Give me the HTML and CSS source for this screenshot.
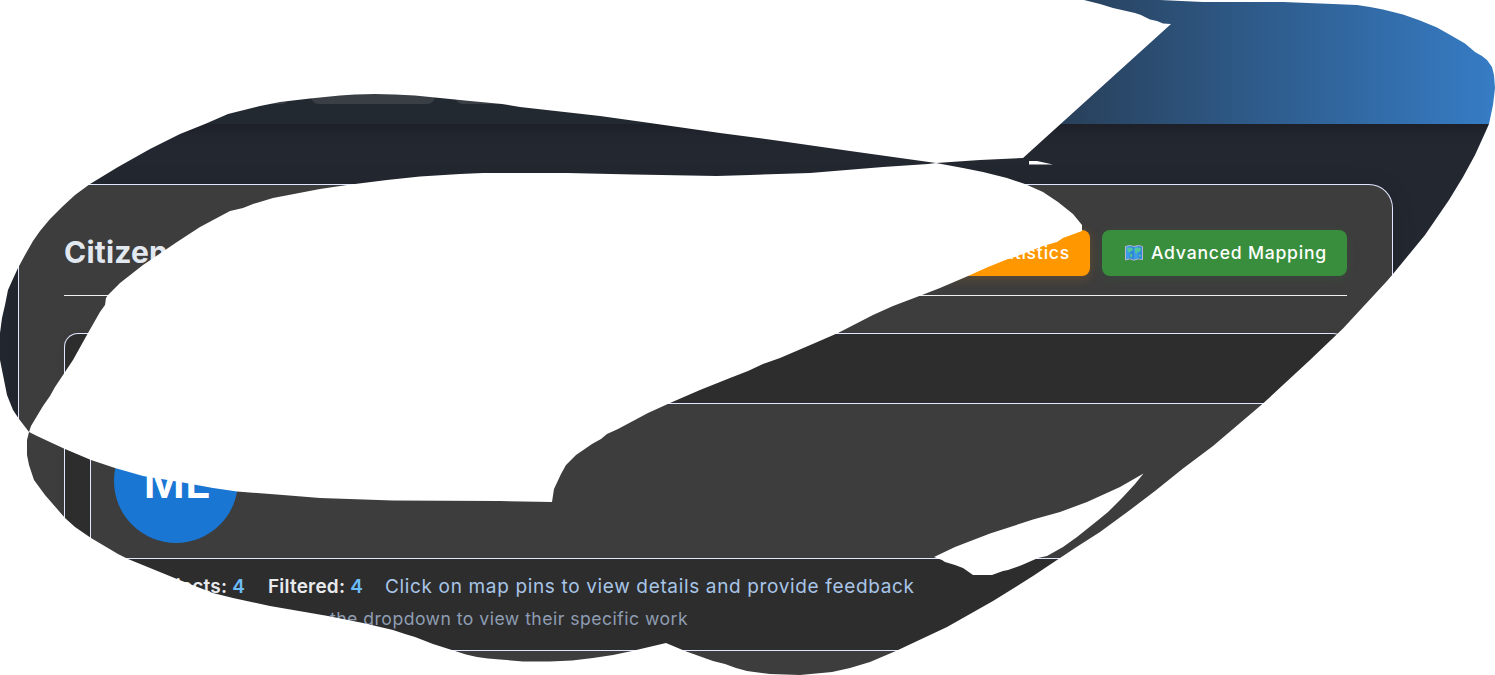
FILE: index.html
```html
<!DOCTYPE html>
<html lang="en">
<head>
<meta charset="utf-8">
<title>Citizen</title>
<link rel="stylesheet" href="styles.css">
</head>
<body>
<header class="topbar">
  <span class="pill pill-a"></span><span class="pill pill-b"></span><span class="pill pill-c"></span>
</header>
<main class="card">
  <div class="card-head">
    <h1 class="title">Citizen</h1>
    <div class="actions">
      <div class="btn btn-orange"><span class="btn-label">Statistics</span></div>
      <div class="btn btn-green">
        <svg class="map-icon" viewBox="0 0 18 16"><path d="M.5 1.5 4.7.5 9 1.5 13.3.5 17.5 1.5V14.7L13.3 13.8 9 15.2 4.7 13.8.5 15Z" fill="#3d9be8" stroke="#b9b4cd"/><path d="M4.7 1V13.5L9 14.8V1.8M13.3 1V13.5L17 14.3V1.8" fill="#2878d0" opacity=".55"/><path d="M2 3 7 2.5 8 5 5.5 6.5 4.5 8 2.5 6ZM5.5 8.5 7.5 9.5 6.5 13 5 11ZM9.5 3.5 13 2.5 16 3 15.5 6 13.5 7.5 12.5 6 11.5 9.5 10 7ZM14 9.5 16 10 15.2 12 13.8 11Z" fill="#4fc79b"/></svg>
        <span class="btn-label">Advanced Mapping</span>
      </div>
    </div>
  </div>
  <section class="panel">
    <div class="profile"><div class="avatar">ML</div></div>
    <div class="info">
      <div class="stats">
        <span class="stat stat-total">Projects: <b>4</b></span>
        <span class="stat stat-filtered">Filtered: <b>4</b></span>
        <span class="hint">Click on map pins to view details and provide feedback</span>
      </div>
      <div class="note">the dropdown to view their specific work</div>
    </div>
    <div class="map"></div>
  </section>
</main>
<svg class="cover" viewBox="0 0 1495 675">
  <path d="M0 0H1084L1100 4 1113 8 1135 13 1141 15 1150 19.500 1157 21 1163 23.500 1171 24 1023 158 980 160 936 163 850 151 780 141 720 133 650 123 600 116 520 107 502 104 470 101 440 98 415 95.500 395 94.500 375 94 355 94.500 340 95.500 310 98.500 280 102 260 106 228 114 205 124 180 134 150 149 118 167 90 184 75 195 62 207 50 219 40 231 33 241 25 255 18 268 12 281 8 290 5 305 2 318 0 333Z"/>
  <path d="M0 360 3 375 7 395 13 410 19 419 29 432 27 440V455L29 465 34 480 45 495 65 518 75 527 91 538 118 554 128 559 177 579 213 593 233 598 270 606 328 616 363 623 393 630 405 634 415 637 433 644 455 651 466 654.500 477 657 488 658.500 500 659.500 523 661.500H550L572 660.500 593 658 613 655 632 651 666 643 685 651 713 661 725 664 736 668 747 671 758 672.500 770 674 800 675H0Z"/>
  <path d="M800 675 832 672 850 668 870 662 897 650.500 947 627 993 601 1033 576 1060 558 1075 548 1100 532 1130 510 1155 491 1183 468.500 1213 446 1263 403.500 1310 360 1343 328.500 1387 281 1393 274 1425 235 1449 200 1463 177 1475 155 1485 133 1489 124 1493 105 1495 88V675Z"/>
  <path d="M1495 88 1494 75 1492 67 1487 60 1482 56 1475 52 1465 43.500 1452 36 1437 27.500 1420 20.500 1403 14.500 1383 9.500 1370 7 1357 5 1333 4 1283 2H1203L1160 0H1495Z"/>
  <path d="M936 163 928 164 883 167 810 173 750 175 717 176 633 174.500 567 173H483L460 174 420 176.500 387 180 347 185 320 189 273 198 253 204 243 208 230 211 200 227 177 242 143 265 120 283 108 295 106 298 105 305 100 312 88 333 73 360 65 372 55 387 50 396 43 406 31 426 29 432 37 436 52 443 65 449 91 460 115 468 143 476 183 482.500 213 488 237 491.500 283 495 320 498 393 500.500 500 501 552 502 554 489 561 474 566 465 576 455 592 444 601 439 607 434 618 429 648 413 670 403 700 390 730 378 748 371 763 364 780 358 815 343 838 333 873 315 893 306 922 295 940 288 968 276 988 267 1008 259 1015 257 1043 246 1057 242 1063 238 1082 231V225L1073 214 1058 202 1043 192 1025 184 1007 178 983 172 963 168Z"/>
  <path d="M1029 161H1037L1053 164.500H1029Z"/>
  <path d="M934 557 955 547 990 533.500 1033 519.500 1060 512 1087 502 1120 487 1143.500 473.500 1135 484 1123 497 1108 512 1097 521 1077 537 1063 547 1047 556 1038 558 1022 565 1008 570 1003 571 992 575H973L963 568 955 565 945 562 942 560Z"/>
</svg>
</body>
</html>
```
FILE: styles.css
```css
* { box-sizing: border-box; }
body {
  margin: 0;
  height: 675px;
  overflow: hidden;
  background: #232730;
  font-family: Inter, "Open Sans", sans-serif;
}
.topbar {
  height: 124px;
  padding: 58px 0 20px 165px;
  display: flex;
  background: linear-gradient(90deg, #232931 60%, #367cc5 100%);
  box-shadow: 0 2px 16px rgba(0, 0, 0, .3);
}
.pill { border-radius: 8px; background: #3a3f45; }
.pill-a { width: 124px; margin-right: 22px; }
.pill-b { width: 124px; margin-right: 20px; }
.pill-c { width: 124px; }
.card {
  width: 1375px;
  height: 491px;
  margin: 60px 0 0 18px;
  padding: 45px 45px 0;
  border: 1px solid #e0e7ff;
  border-bottom: 0;
  border-radius: 24px 24px 0 0;
  background: #3d3d3d;
  box-shadow: 0 4px 24px rgba(0, 0, 0, .12);
}
.card-head {
  height: 66px;
  display: flex;
  justify-content: space-between;
  border-bottom: 1px solid #f0f0f0;
}
.title {
  margin: 0;
  font-size: 30px;
  line-height: 45px;
  font-weight: 700;
  letter-spacing: .2px;
  color: #e2e8f0;
}
.actions { display: flex; gap: 12px; }
.btn {
  height: 46px;
  display: flex;
  align-items: center;
  border-radius: 8px;
  color: #fff;
  font-size: 17.6px;
  font-weight: 500;
  white-space: nowrap;
}
.btn-orange {
  width: 165px;
  justify-content: flex-end;
  padding-right: 20px;
  background: #ff9800;
  box-shadow: 0 2px 12px rgba(255, 152, 0, .2);
}
.btn-green {
  width: 245px;
  padding-left: 23px;
  gap: 8px;
  background: #388e3c;
  box-shadow: 0 2px 12px rgba(56, 142, 60, .15);
}
.map-icon { width: 18px; height: 16px; }
.btn-label { padding-bottom: 2px; letter-spacing: .77px; }
.panel {
  height: 342px;
  margin-top: 37px;
  padding-top: 69px;
  border: 1px solid #e0e7ff;
  border-bottom: 0;
  border-radius: 14px 14px 0 0;
  background: #2d2d2d;
  box-shadow: 0 2px 8px rgba(0, 0, 0, .1);
}
.profile {
  height: 155px;
  margin: 0 25px;
  padding: 15px 23px;
  border: 1px solid #e0e7ff;
  border-bottom: 0;
  background: #3d3d3d;
}
.avatar {
  width: 124px;
  height: 124px;
  padding-left: 2px;
  border-radius: 50%;
  background: #1976d2;
  color: #fff;
  font-size: 45px;
  line-height: 125px;
  font-weight: 600;
  text-align: center;
}
.info {
  height: 93px;
  padding-top: 12px;
  border-top: 1px solid #e0e7ff;
  border-bottom: 1px solid #e0e7ff;
  white-space: nowrap;
}
.stats { display: flex; height: 32px; line-height: 32px; font-size: 19px; }
.stat { text-align: right; font-weight: 600; color: #e8eaed; letter-spacing: .2px; }
.stat b { font-weight: 600; color: #6cbcf8; }
.stat-total { width: 180px; }
.stat-filtered { width: 118px; }
.hint { margin-left: 22px; color: #a8c5e8; letter-spacing: .65px; }
.note {
  margin-left: 265px;
  line-height: 32px;
  font-size: 17.6px;
  color: #8f9db3;
  letter-spacing: .48px;
}
.map { height: 24px; background: #3d3d3d; }
.cover {
  position: absolute;
  left: 0;
  top: 0;
  width: 1495px;
  height: 675px;
  fill: #fff;
}
```
